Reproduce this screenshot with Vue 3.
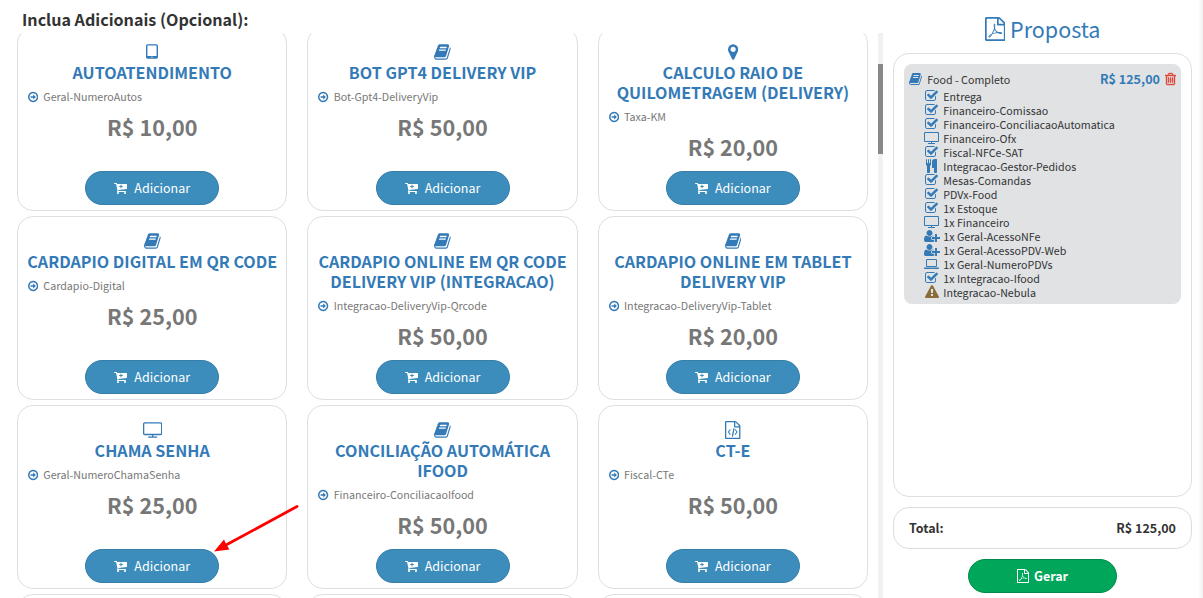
<script setup>
import { ref, computed } from 'vue'

// Contornos dos ícones: x inicial, largura e path (altura fixa de 1792)
const arquivo = 'M1596 380q28 28 48 76t20 88v1152q0 40-28 68t-68 28h-1344q-40 0-68-28t-28-68v-1600q0-40 28-68t68-28h896q40 0 88 20t76 48zm-444-244v376h376q-10-29-22-41l-313-313q-12-12-41-22zm384 1528v-1024h-416q-40 0-68-28t-28-68v-416h-768v1536h1280z'

const icones = {
  livro: { x: 64, w: 1664, d: 'M1703 478q40 57 18 129l-275 906q-19 64-76.500 107.500t-122.500 43.500h-923q-77 0-148.500-53.500t-99.500-131.500q-24-67-2-127 0-4 3-27t4-37q1-8-3-21.500t-3-19.500q2-11 8-21t16.500-23.500 16.500-23.500q23-38 45-91.500t30-91.500q3-10 .5-30t-.5-28q3-11 17-28t17-23q21-36 42-92t25-90q1-9-2.500-32t.5-28q4-13 22-30.500t22-22.500q19-26 42.500-84.500t27.500-96.500q1-8-3-25.500t-2-26.500q2-8 9-18t18-23 17-21q8-12 16.500-30.500t15-35 16-36 19.500-32 26.500-23.500 36-11.500 47.500 5.500l-1 3q38-9 51-9h761q74 0 114 56t18 130l-274 906q-36 119-71.500 153.500t-128.500 34.500h-869q-27 0-38 15-11 16-1 43 24 70 144 70h923q29 0 56-15.500t35-41.500l300-987q7-22 5-57 38 15 59 43zm-1064 2q-4 13 2 22.500t20 9.500h608q13 0 25.500-9.500t16.500-22.500l21-64q4-13-2-22.500t-20-9.500h-608q-13 0-25.500 9.500t-16.500 22.500zm-83 256q-4 13 2 22.500t20 9.500h608q13 0 25.500-9.500t16.500-22.500l21-64q4-13-2-22.500t-20-9.500h-608q-13 0-25.500 9.500t-16.500 22.500z' },
  mapa: { x: 384, w: 1024, d: 'M1152 640q0-106-75-181t-181-75-181 75-75 181 75 181 181 75 181-75 75-181zm256 0q0 109-33 179l-364 774q-16 33-47.500 52t-67.500 19-67.500-19-46.500-52l-365-774q-33-70-33-179 0-212 150-362t362-150 362 150 150 362z' },
  tablet: { x: 300, w: 1192, d: 'M460 128h872q66 0 113 47t47 113v1116q0 66-47 113t-113 47h-872q-66 0-113-47t-47-113v-1116q0-66 47-113t113-47zM440 276v1016h912v-1016q0-22-22-22h-868q-22 0-22 22zM836 1412a60 60 0 1 0 120 0a60 60 0 1 0-120 0z' },
  monitor: { x: 0, w: 1920, d: 'M160 128h1600q66 0 113 47t47 113v960q0 66-47 113t-113 47h-736v128h352q32 0 32 32v64q0 32-32 32h-832q-32 0-32-32v-64q0-32 32-32h352v-128h-736q-66 0-113-47t-47-113v-960q0-66 47-113t113-47zM128 288v960q0 32 32 32h1600q32 0 32-32v-960q0-32-32-32h-1600q-32 0-32 32z' },
  notebook: { x: 0, w: 1920, d: 'M416 256h1088q66 0 113 47t47 113v704q0 66-47 113t-113 47h-1088q-66 0-113-47t-47-113v-704q0-66 47-113t113-47zM384 416v704q0 32 32 32h1088q32 0 32-32v-704q0-32-32-32h-1088q-32 0-32 32zM0 1344h1920v96q0 40-47 68t-113 28h-1600q-66 0-113-28t-47-68zM880 1408q-16 0-16 16t16 16h160q16 0 16-16t-16-16z' },
  codigo: { x: 128, w: 1536, d: arquivo + 'M624 800l76 58-170 244 170 244-76 58-216-302zM1168 800l216 302-216 302-76-58 170-244-170-244zM958 720l122 22-152 820-122-22z' },
  pdf: { x: 128, w: 1536, d: arquivo + 'M1022 1071q33 26 84 56 59-7 117-7 147 0 177 49 16 22 2 52 0 1-1 2l-2 2v1q-6 38-71 38-48 0-115-20t-130-53q-221 24-392 83-153 262-242 262-15 0-28-7l-24-12q-1-1-6-5-10-10-6-36 9-40 56-91.500t132-96.500q14-9 23 6 2 2 2 4 52-85 107-197 68-136 104-262-24-82-30.500-159.500t6.500-127.500q11-40 42-40h22q23 0 35 15 18 21 9 68-2 6-4 8 1 3 1 8v30q-2 123-14 192 55 164 146 238zm-576 411q52-24 137-158-51 40-87.500 84t-49.500 74zm398-920q-15 42-2 132 1-7 7-44 0-3 7-43 1-4 4-8-1-1-1-2t-1-2-1-3q-1-22-13-36 0 1-1 2v2zm-124 661q135-54 284-81-2-1-13-9.500t-16-13.500q-76-67-127-176-27 86-83 197-30 56-45 83zm646-16q-24-24-140-24 76 28 124 28 14 0 18-1 0-1-2-3z' },
  seta: { x: 128, w: 1536, d: 'M1280 896q0 14-9 23l-320 320q-9 9-23 9-13 0-22.500-9.500t-9.500-22.500v-192h-352q-13 0-22.500-9.500t-9.500-22.500v-192q0-13 9.500-22.500t22.500-9.500h352v-192q0-14 9-23t23-9q12 0 24 10l319 319q9 9 9 23zm160 0q0-148-73-273t-198-198-273-73-273 73-198 198-73 273 73 273 198 198 273 73 273-73 198-198 73-273zm224 0q0 209-103 385.500t-279.500 279.500-385.500 103-385.500-103-279.500-279.500-103-385.500 103-385.500 279.500-279.500 385.500-103 385.500 103 279.500 279.500 103 385.500z' },
  carrinho: { x: 64, w: 1664, d: 'M1216 704q0-26-19-45t-45-19h-128v-128q0-26-19-45t-45-19-45 19-19 45v128h-128q-26 0-45 19t-19 45 19 45 45 19h128v128q0 26 19 45t45 19 45-19 19-45v-128h128q26 0 45-19t19-45zm-512 832q0 53-37.500 90.500t-90.500 37.500-90.500-37.500-37.500-90.500 37.500-90.500 90.500-37.500 90.500 37.500 37.500 90.500zm896 0q0 53-37.500 90.500t-90.500 37.500-90.500-37.500-37.500-90.500 37.500-90.500 90.500-37.500 90.500 37.500 37.500 90.500zm128-1088v512q0 24-16 42.500t-41 21.500l-1044 122q1 7 4.500 21.500t6 26.500 2.500 22q0 16-24 64h920q26 0 45 19t19 45-19 45-45 19h-1024q-26 0-45-19t-19-45q0-14 11-39.500t29.500-59.500 20.500-38l-177-823h-204q-26 0-45-19t-19-45 19-45 45-19h256q16 0 28.500 6.500t20 15.500 13 24.500 7.500 26.500 5.500 29.500 4.500 25.500h1201q26 0 45 19t19 45z' },
  check: { x: 64, w: 1664, d: 'M1472 930v318q0 119-84.500 203.500t-203.500 84.500h-832q-119 0-203.500-84.500t-84.500-203.500v-832q0-119 84.500-203.500t203.500-84.500h832q63 0 117 25 15 7 18 23 3 17-9 29l-49 49q-10 10-23 10-3 0-9-2-23-6-45-6h-832q-66 0-113 47t-47 113v832q0 66 47 113t113 47h832q66 0 113-47t47-113v-254q0-13 9-22l64-64q10-10 23-10 6 0 12 3 20 8 20 29zm231-489l-814 814q-24 24-57 24t-57-24l-430-430q-24-24-24-57t24-57l110-110q24-24 57-24t57 24l263 263 647-647q24-24 57-24t57 24l110 110q24 24 24 57t-24 57z' },
  talheres: { x: 192, w: 1408, d: 'M832 64v640q0 61-35.500 111t-92.500 70v779q0 52-38 90t-90 38h-128q-52 0-90-38t-38-90v-779q-57-20-92.500-70t-35.500-111v-640q0-26 19-45t45-19 45 19 19 45v416q0 26 19 45t45 19 45-19 19-45v-416q0-26 19-45t45-19 45 19 19 45v416q0 26 19 45t45 19 45-19 19-45v-416q0-26 19-45t45-19 45 19 19 45zm768 0v1600q0 52-38 90t-90 38h-128q-52 0-90-38t-38-90v-512h-224q-13 0-22.500-9.500t-9.500-22.500v-800q0-132 94-226t226-94h256q26 0 45 19t19 45z' },
  usuario: { x: 0, w: 2048, d: 'M704 896q-159 0-271.500-112.500t-112.500-271.500 112.500-271.500 271.500-112.500 271.500 112.500 112.500 271.500-112.500 271.500-271.500 112.500zm960 128h352q13 0 22.500 9.500t9.500 22.500v192q0 13-9.500 22.500t-22.500 9.500h-352v352q0 13-9.500 22.500t-22.500 9.500h-192q-13 0-22.500-9.500t-9.500-22.500v-352h-352q-13 0-22.500-9.500t-9.500-22.500v-192q0-13 9.500-22.500t22.500-9.500h352v-352q0-13 9.500-22.500t22.500-9.500h192q13 0 22.500 9.500t9.500 22.500v352zm-736 224q0 52 38 90t90 38h256v238q-68 50-171 50h-874q-121 0-194-69t-73-190q0-53 3.500-103.500t14-109 26.500-108.500 43-97.500 62-81 85.500-53.500 111.500-20q19 0 39 17 79 61 154.500 91.500t164.500 30.500 164.500-30.500 154.500-91.500q20-17 39-17 132 0 217 96h-223q-52 0-90 38t-38 90v192z' },
  alerta: { x: 0, w: 1792, d: 'M1024 1375v-190q0-14-9.500-23.500t-22.500-9.500h-192q-13 0-22.500 9.500t-9.500 23.500v190q0 14 9.500 23.500t22.500 9.500h192q13 0 22.500-9.500t9.500-23.500zm-2-374l18-459q0-12-10-19-13-11-24-11h-220q-11 0-24 11-10 7-10 21l17 457q0 10 10 16.500t24 6.500h185q14 0 23.500-6.500t10.500-16.500zm-14-934l768 1408q35 63-2 126-17 29-46.500 46t-63.500 17h-1536q-34 0-63.500-17t-46.500-46q-37-63-2-126l768-1408q17-31 47-49t65-18 65 18 47 49z' },
  lixeira: { x: 192, w: 1408, d: 'M704 736v576q0 14-9 23t-23 9h-64q-14 0-23-9t-9-23v-576q0-14 9-23t23-9h64q14 0 23 9t9 23zm256 0v576q0 14-9 23t-23 9h-64q-14 0-23-9t-9-23v-576q0-14 9-23t23-9h64q14 0 23 9t9 23zm256 0v576q0 14-9 23t-23 9h-64q-14 0-23-9t-9-23v-576q0-14 9-23t23-9h64q14 0 23 9t9 23zm128 724v-948h-896v948q0 22 7 40.500t14.500 27 10.500 8.500h832q3 0 10.500-8.500t14.500-27 7-40.500zm-672-1076h448l-48-117q-7-9-17-11h-317q-10 2-17 11zm928 32v64q0 14-9 23t-23 9h-96v948q0 83-47 143.500t-113 60.500h-832q-66 0-113-58.500t-47-141.500v-952h-96q-14 0-23-9t-9-23v-64q0-14 9-23t23-9h309l70-167q15-37 54-63t79-26h320q40 0 79 26t54 63l70 167h309q14 0 23 9t9 23z' }
}

const caixa = (nome) => `${icones[nome].x} 0 ${icones[nome].w} 1792`

const adicionais = ref([
  { icone: 'tablet', nome: 'AUTOATENDIMENTO', codigo: 'Geral-NumeroAutos', valor: 10 },
  { icone: 'livro', nome: 'BOT GPT4 DELIVERY VIP', codigo: 'Bot-Gpt4-DeliveryVip', valor: 50 },
  { icone: 'mapa', nome: 'CALCULO RAIO DE\nQUILOMETRAGEM (DELIVERY)', codigo: 'Taxa-KM', valor: 20 },
  { icone: 'livro', nome: 'CARDAPIO DIGITAL EM QR CODE', codigo: 'Cardapio-Digital', valor: 25 },
  { icone: 'livro', nome: 'CARDAPIO ONLINE EM QR CODE\nDELIVERY VIP (INTEGRACAO)', codigo: 'Integracao-DeliveryVip-Qrcode', valor: 50 },
  { icone: 'livro', nome: 'CARDAPIO ONLINE EM TABLET\nDELIVERY VIP', codigo: 'Integracao-DeliveryVip-Tablet', valor: 20 },
  { icone: 'monitor', nome: 'CHAMA SENHA', codigo: 'Geral-NumeroChamaSenha', valor: 25 },
  { icone: 'livro', nome: 'CONCILIAÇÃO AUTOMÁTICA\nIFOOD', codigo: 'Financeiro-ConciliacaoIfood', valor: 50 },
  { icone: 'codigo', nome: 'CT-E', codigo: 'Fiscal-CTe', valor: 50 }
])

const plano = ref({
  nome: 'Food - Completo',
  valor: 125,
  itens: [
    { icone: 'check', nome: 'Entrega' },
    { icone: 'check', nome: 'Financeiro-Comissao' },
    { icone: 'check', nome: 'Financeiro-ConciliacaoAutomatica' },
    { icone: 'monitor', nome: 'Financeiro-Ofx' },
    { icone: 'check', nome: 'Fiscal-NFCe-SAT' },
    { icone: 'talheres', nome: 'Integracao-Gestor-Pedidos' },
    { icone: 'check', nome: 'Mesas-Comandas' },
    { icone: 'check', nome: 'PDVx-Food' },
    { icone: 'check', nome: '1x Estoque' },
    { icone: 'monitor', nome: '1x Financeiro' },
    { icone: 'usuario', nome: '1x Geral-AcessoNFe' },
    { icone: 'usuario', nome: '1x Geral-AcessoPDV-Web' },
    { icone: 'notebook', nome: '1x Geral-NumeroPDVs' },
    { icone: 'check', nome: '1x Integracao-Ifood' },
    { icone: 'alerta', nome: 'Integracao-Nebula' }
  ]
})

const total = computed(() => plano.value.valor)

const formatar = (valor) => 'R$ ' + valor.toFixed(2).replace('.', ',')
</script>

<template>
  <div class="pagina">
    <section class="adicionais">
      <h4 class="titulo">Inclua Adicionais (Opcional):</h4>
      <div class="rolagem">
        <div class="grade">
          <div v-for="item in adicionais" :key="item.codigo" class="cartao">
            <svg class="icone icone-cartao" :viewBox="caixa(item.icone)"><path fill-rule="evenodd" :d="icones[item.icone].d" /></svg>
            <div class="nome">{{ item.nome }}</div>
            <div class="codigo">
              <svg class="icone" :viewBox="caixa('seta')"><path :d="icones.seta.d" /></svg>
              <span>{{ item.codigo }}</span>
            </div>
            <div class="preco">{{ formatar(item.valor) }}</div>
            <button class="botao azul">
              <svg class="icone" :viewBox="caixa('carrinho')"><path :d="icones.carrinho.d" /></svg>
              <span>Adicionar</span>
            </button>
          </div>
          <div v-for="n in 3" :key="n" class="cartao"></div>
        </div>
        <div class="barra"><div class="polegar"></div></div>
      </div>
    </section>

    <aside class="proposta">
      <h3 class="cabecalho">
        <svg class="icone" :viewBox="caixa('pdf')"><path fill-rule="evenodd" :d="icones.pdf.d" /></svg>
        <span>Proposta</span>
      </h3>
      <div class="painel">
        <div class="plano">
          <div class="plano-topo">
            <span class="fixo"><svg class="icone" :viewBox="caixa('livro')"><path :d="icones.livro.d" /></svg></span>
            <span class="plano-nome">{{ plano.nome }}</span>
            <b class="plano-valor">{{ formatar(plano.valor) }}</b>
            <svg class="icone lixeira" :viewBox="caixa('lixeira')"><path :d="icones.lixeira.d" /></svg>
          </div>
          <div v-for="item in plano.itens" :key="item.nome" class="plano-item">
            <span class="fixo" :class="item.icone">
              <svg class="icone" :viewBox="caixa(item.icone)"><path :fill-rule="item.icone === 'usuario' ? 'nonzero' : 'evenodd'" :d="icones[item.icone].d" /></svg>
            </span>
            <span>{{ item.nome }}</span>
          </div>
        </div>
      </div>
      <div class="total">
        <span>Total:</span>
        <span>{{ formatar(total) }}</span>
      </div>
      <button class="botao verde">
        <svg class="icone" :viewBox="caixa('pdf')"><path fill-rule="evenodd" :d="icones.pdf.d" /></svg>
        <span>Gerar</span>
      </button>
    </aside>

    <!-- Seta que indica o botão do item Chama Senha -->
    <svg class="indicador" viewBox="0 0 90 52">
      <path d="M86 3.500L15 42" stroke="#f00" stroke-width="2.8" stroke-linecap="round" />
      <path d="M3 48.500L13 36.500L15 41L18.500 46.500Z" fill="#f00" />
    </svg>
  </div>
</template>

<style>
body {
  margin: 0;
  background: #fff;
}
</style>

<style scoped>
.pagina {
  position: relative;
  display: flex;
  width: 1203px;
  height: 598px;
  overflow: hidden;
  box-sizing: border-box;
  background: linear-gradient(to left, #f1f1f1, #fff 5px);
  font-family: "Noto Sans CJK SC", "Noto Sans", sans-serif;
  color: #333;
}

.icone {
  display: block;
  flex: none;
  height: 1em;
  fill: currentColor;
}

.adicionais {
  display: flex;
  flex-direction: column;
  width: 883px;
}

.titulo {
  margin: 0;
  padding: 8px 0 0 22px;
  height: 25px;
  font-size: 16.1px;
  font-weight: 700;
  line-height: 22px;
}

.rolagem {
  display: flex;
  justify-content: space-between;
  height: 565px;
  overflow: hidden;
}

.grade {
  display: grid;
  grid-template-columns: repeat(3, minmax(0, 1fr));
  grid-auto-rows: 184px;
  gap: 5px 20px;
  width: 851px;
  margin: -6px 0 0 17.05px;
}

.cartao {
  display: flex;
  flex-direction: column;
  align-items: center;
  box-sizing: border-box;
  padding: 14.5px 10px 5px;
  border: 1px solid #dcdfe3;
  border-radius: 16px;
  background: #fff;
}

.icone-cartao {
  font-size: 18px;
  color: #337ab7;
}

.nome {
  margin-top: 1.5px;
  font-size: 16.1px;
  font-weight: 700;
  line-height: 20px;
  text-align: center;
  white-space: pre;
  color: #337ab7;
}

.codigo {
  display: flex;
  align-items: center;
  align-self: stretch;
  gap: 5px;
  margin-top: 7px;
  font-size: 10.7px;
  line-height: 15.5px;
  color: #777;
}

.codigo .icone {
  font-size: 12px;
  color: #337ab7;
}

.preco {
  margin-top: 8.500px;
  font-size: 21.6px;
  font-weight: 700;
  line-height: 28px;
  color: #777;
}

.botao {
  display: flex;
  align-items: center;
  justify-content: center;
  flex: none;
  box-sizing: border-box;
  height: 34px;
  padding: 0;
  border: 1px solid;
  border-radius: 20px;
  color: #fff;
  font-family: inherit;
  font-size: 12.5px;
  line-height: 20px;
}

.botao .icone {
  font-size: 14px;
}

.azul {
  width: 134px;
  margin-top: auto;
  gap: 7px;
  border-color: #367fa9;
  background: #3c8dbc;
}

.barra {
  width: 5px;
  background: #f1f1f1;
}

.polegar {
  height: 90px;
  margin-top: 31px;
  background: #888;
}

.proposta {
  display: flex;
  flex-direction: column;
  width: 299px;
  margin-left: 10px;
}

.cabecalho {
  display: flex;
  align-items: center;
  justify-content: center;
  gap: 5px;
  height: 53px;
  margin: 0;
  padding-top: 5px;
  box-sizing: border-box;
  font-size: 21.5px;
  font-weight: 400;
  color: #337ab7;
}

.cabecalho span {
  padding-bottom: 2px;
}

.cabecalho .icone {
  font-size: 24px;
}

.painel {
  height: 444px;
  box-sizing: border-box;
  padding: 10px;
  border: 1px solid #dcdfe3;
  border-radius: 16px;
  background: #fff;
}

.plano {
  height: 240px;
  box-sizing: border-box;
  padding: 5px 5px 0 2.5px;
  border-radius: 8px;
  background: #e0e2e4;
  font-size: 10.7px;
}

.plano-topo {
  display: flex;
  align-items: center;
  height: 21px;
}

.plano-topo .icone {
  margin-top: -1px;
}

.fixo {
  display: flex;
  justify-content: center;
  width: 18px;
  margin-right: 2.8px;
  font-size: 14px;
  color: #337ab7;
}

.plano-nome {
  flex: 1;
}

.plano-valor {
  margin-right: 5px;
  font-size: 12.6px;
  line-height: 18px;
  padding-bottom: 1px;
  color: #337ab7;
}

.lixeira {
  font-size: 14px;
  color: #dd4b39;
  stroke: currentColor;
  stroke-width: 50;
}

.plano-item {
  display: flex;
  align-items: center;
  height: 14px;
  padding-left: 16px;
  line-height: 14px;
}

.plano-item .icone {
  margin-top: -2px;
}

.alerta {
  color: #8a6d3b;
}

.total {
  display: flex;
  align-items: center;
  justify-content: space-between;
  height: 42px;
  box-sizing: border-box;
  margin-top: 10px;
  padding: 0 15px 1px;
  border: 1px solid #dcdcdc;
  border-radius: 16px;
  background: #fff;
  font-size: 12.5px;
  line-height: 18px;
  font-weight: 700;
}

.verde {
  align-self: center;
  width: 149px;
  margin-top: 10px;
  gap: 5px;
  border-color: #008d4c;
  background: #00a65a;
  font-weight: 700;
}

.indicador {
  position: absolute;
  left: 211px;
  top: 503px;
  width: 90px;
  height: 52px;
  fill: none;
}
</style>
